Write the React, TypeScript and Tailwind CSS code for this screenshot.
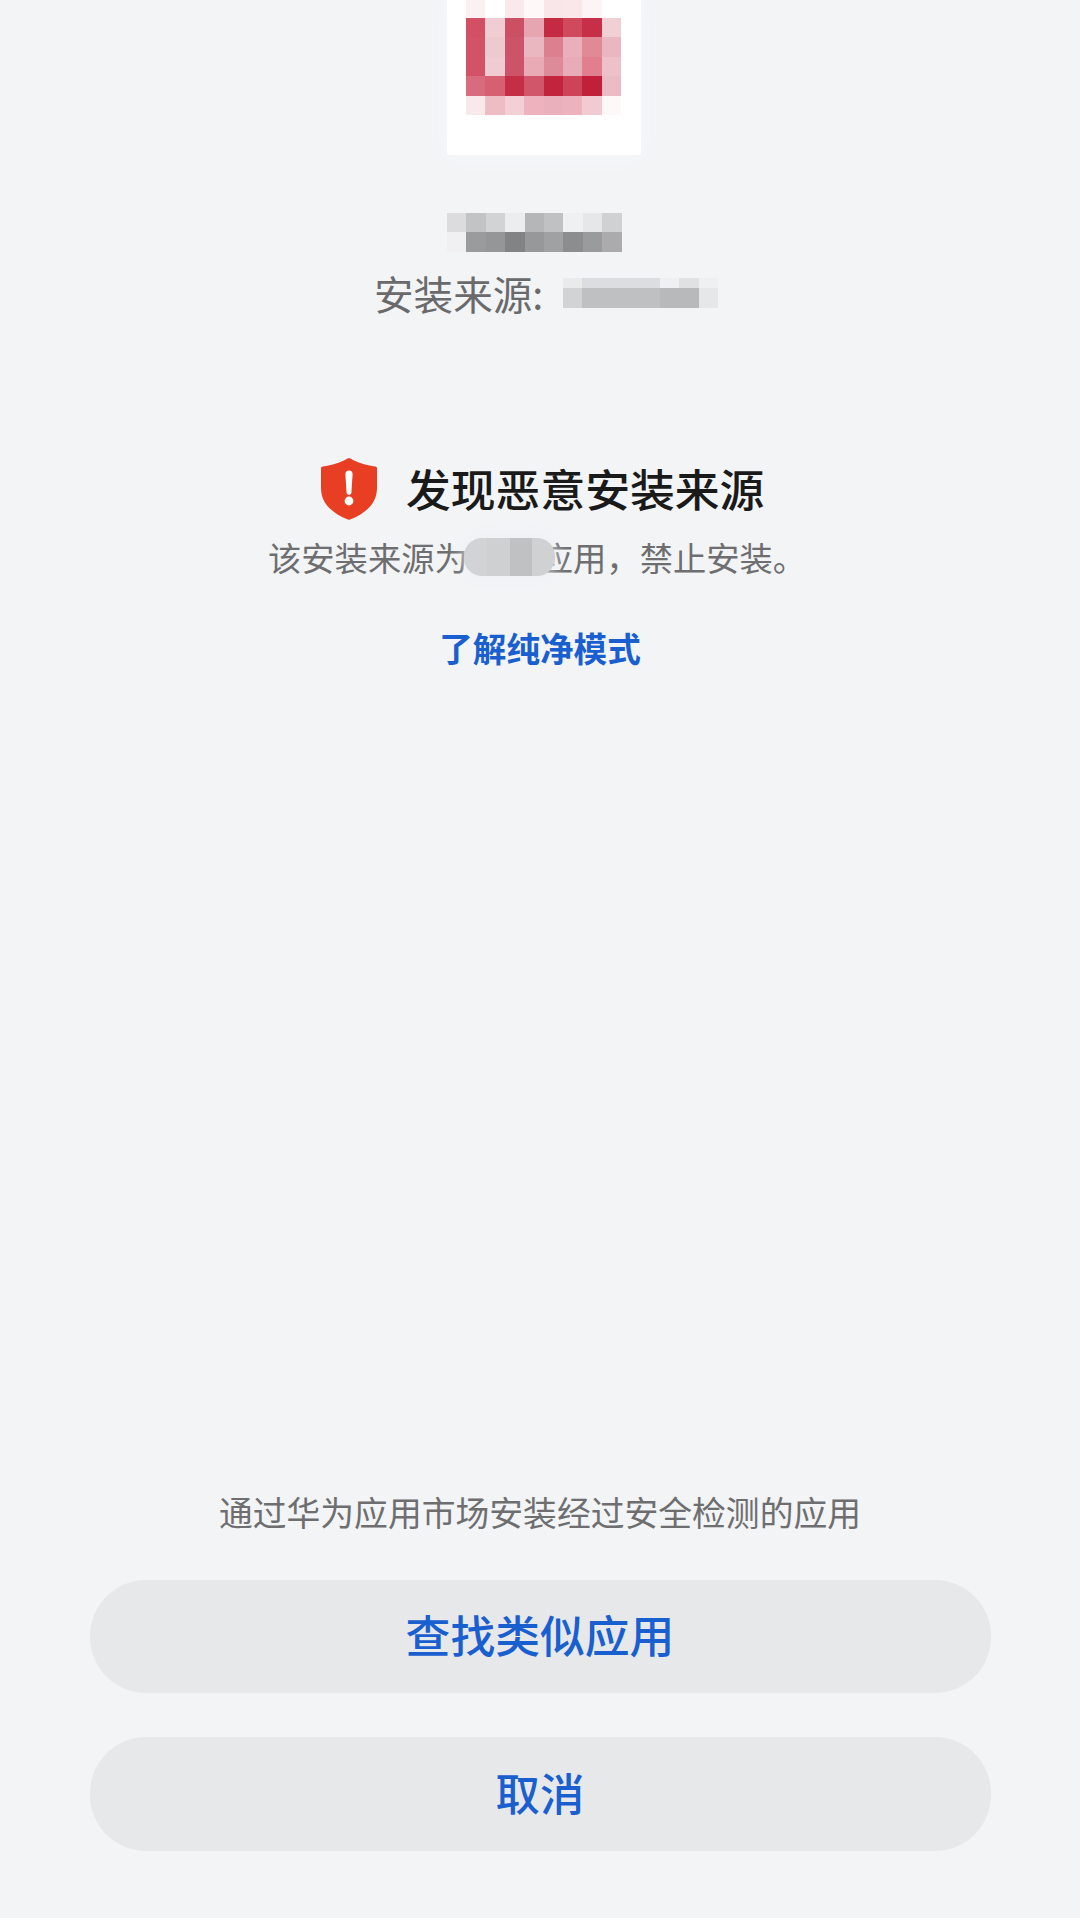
const iconRows = [
  ["#fcf1f2", "#ffffff", "#fae9eb", "#fef8f8", "#f9e6e8", "#f9e7e9", "#fdf4f5", "#ffffff"],
  ["#d25064", "#f0cdd3", "#cc5064", "#e6a5b1", "#c42a42", "#cf4a5d", "#c72e47", "#f0d0d5"],
  ["#d25267", "#eccad0", "#cd5368", "#eab6c0", "#dc8090", "#e9b0bc", "#e08a98", "#eab6bf"],
  ["#d25267", "#f0ccd2", "#cd5368", "#e9aab6", "#dd8a99", "#e8acb8", "#e17f90", "#eec0c8"],
  ["#d96b7e", "#d65f72", "#c42f47", "#d2566a", "#c2243e", "#cd4358", "#c2203a", "#ecbcc5"],
  ["#fae9eb", "#eebcc5", "#f3d0d6", "#ecb3be", "#eab0bb", "#ecb3be", "#f2cad1", "#fef8f8"],
];
const nameRows = [
  ["#dcdcde", "#c2c3c5", "#d2d3d5", "#ecedef", "#b5b6b8", "#c0c1c3", "#eff0f2", "#e6e7e9", "#d0d1d3"],
  ["#f0f0f2", "#9a9b9d", "#959698", "#828385", "#979899", "#a0a1a3", "#8c8d8f", "#9a9b9d", "#ababad"],
];
const sourceRows = [
  ["#e9eaec", "#dcdde0", "#dcdde0", "#dcdde0", "#dcdde0", "#eff0f2", "#e0e1e3", "#eff0f2"],
  ["#d2d3d5", "#bfc0c2", "#bfc0c2", "#bfc0c2", "#bfc0c2", "#b8b9bb", "#b8b9bb", "#e6e7e9"],
];
const blobCells = ["#d2d3d5", "#cfd0d2", "#c0c1c3", "#d0d1d3"];

function Mosaic({ rows, heights }: { rows: string[][]; heights: number[] }) {
  return (
    <div className="flex flex-col">
      {rows.map((row, r) => (
        <div key={r} className="flex" style={{ height: heights[r] }}>
          {row.map((color, c) => (
            <div key={c} className="w-[19.4px] h-full" style={{ backgroundColor: color }} />
          ))}
        </div>
      ))}
    </div>
  );
}

function Shield() {
  return (
    <svg width="56" height="62" viewBox="0 0 56 62" className="shrink-0">
      <path
        d="M26.5 .6 C27.4 .1 28.6 .1 29.5 .6 C36 4.6 45 7.4 54.4 8.6 C55.4 8.8 56 9.4 56 10.4 L56 30 C56 45 45.5 55 29 61.6 C28.3 61.9 27.7 61.9 27 61.6 C10.5 55 0 45 0 30 L0 10.4 C0 9.4 .6 8.8 1.6 8.6 C11 7.4 20 4.6 26.5 .6 Z"
        fill="#e83f24"
      />
      <path d="M24.4 16 C24.4 11.4 31.6 11.4 31.6 16 L30.4 35 C30.2 37.4 25.8 37.4 25.6 35 Z" fill="#fff" />
      <circle cx="28" cy="43" r="4.4" fill="#fff" />
    </svg>
  );
}

export default function App() {
  return (
    <div
      className="w-[1080px] h-[1918px] bg-[#f2f4f6] flex flex-col overflow-hidden"
      style={{ fontFamily: '"Noto Sans CJK SC", "Noto Sans", sans-serif' }}
    >
      <div className="ml-[447px] w-[194px] h-[155px] bg-white rounded-b-[3px] pl-[19px] shadow-[0_0_22px_#f7f8fa]">
        <Mosaic rows={iconRows} heights={[18, 19.4, 19.4, 19.4, 19.4, 19.4]} />
      </div>

      <div className="ml-[447px] mt-[58px]">
        <Mosaic rows={nameRows} heights={[19.4, 19.4]} />
      </div>

      <div className="ml-[374px] mt-[18px] flex items-center h-[46px]">
        <span className="text-[39.6px] leading-[46px] text-[#6a6a6c] w-[189px] whitespace-nowrap">安装来源:</span>
        <Mosaic rows={sourceRows} heights={[10, 20]} />
      </div>

      <div className="ml-[321px] mt-[142px] flex items-center h-[62px]">
        <Shield />
        <h1 className="ml-[29px] pb-[2px] text-[44.8px] leading-[62px] font-medium text-[#1a1a1a] whitespace-nowrap">发现恶意安装来源</h1>
      </div>

      <div className="relative ml-[268px] mt-[15px] w-[540px] h-[44px] text-[33.3px] leading-[44px] text-[#6e6e70] whitespace-nowrap">
        该安装来源为<span className="inline-block w-[72px]" />应用，禁止安装。
        <div className="absolute left-[196px] top-[3px] w-[91px] h-[38px] flex overflow-hidden rounded-[18px] shadow-[0_0_16px_#eef0f2]">
          {blobCells.map((color) => (
            <div key={color} className="flex-1" style={{ backgroundColor: color }} />
          ))}
        </div>
      </div>

      <a className="mx-auto mt-[47px] text-[33.6px] leading-[44px] font-bold text-[#1a5fcf] whitespace-nowrap">了解纯净模式</a>

      <div className="mt-auto flex flex-col items-center">
        <p className="h-[44px] text-[33.8px] leading-[42px] text-[#6e6e70] whitespace-nowrap">通过华为应用市场安装经过安全检测的应用</p>
        <div className="mt-[45px] flex flex-col gap-[44px] w-[901px] pb-[67px]">
          <button className="h-[113px] rounded-[56px] bg-[#e7e8ea] pb-[5px] text-[44.8px] font-medium text-[#1a5fcf]">查找类似应用</button>
          <button className="h-[114px] rounded-[56px] bg-[#e7e8ea] pb-[3px] text-[44.4px] font-medium text-[#1a5fcf]">取消</button>
        </div>
      </div>
    </div>
  );
}
